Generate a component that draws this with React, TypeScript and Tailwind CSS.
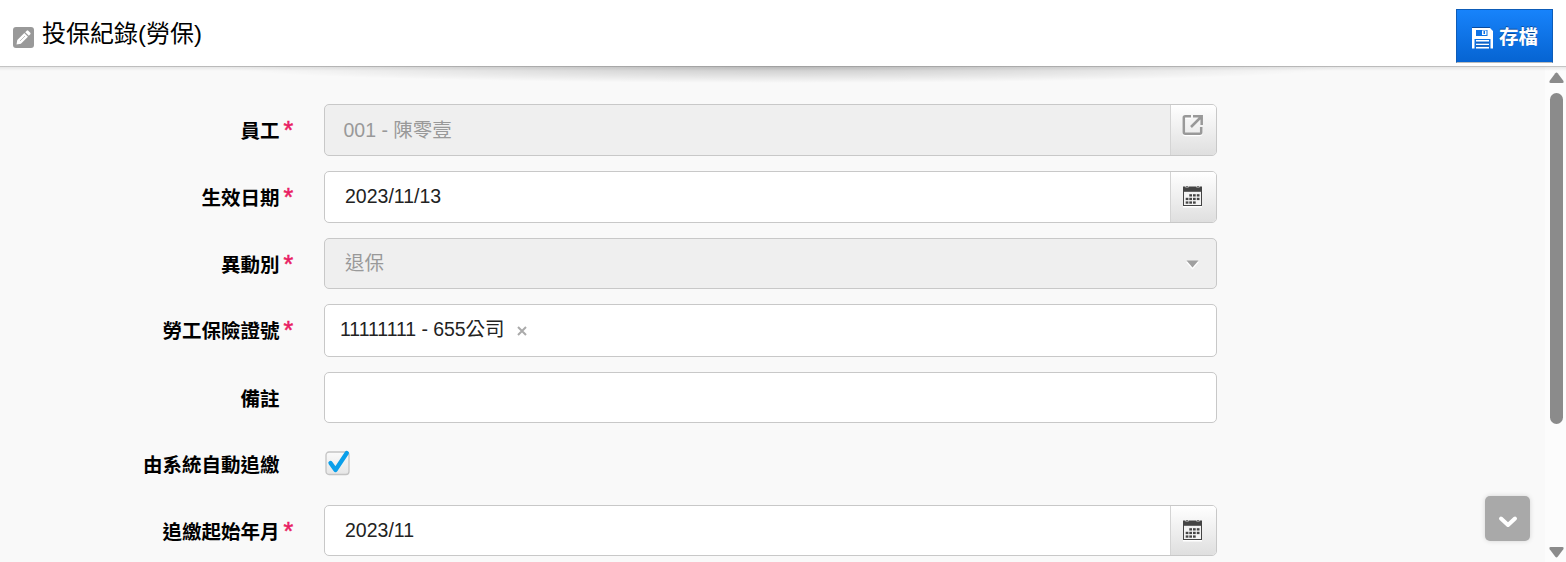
import type { ReactNode } from 'react'

interface RowProps {
  label: string
  required?: boolean
  className: string
  children: ReactNode
}

function FormRow({ label, required, className, children }: RowProps) {
  return (
    <div className={`flex ${className}`}>
      <div className="flex w-[324px] shrink-0 pt-[13px] text-[19.5px] leading-[28px]">
        <label className="w-[279.500px] text-right font-bold whitespace-nowrap text-black">{label}</label>
        {required && (
          <span className="ml-[4px] text-[25px] leading-[27px] text-[#e91e63] [-webkit-text-stroke:0.5px_#e91e63]">*</span>
        )}
      </div>
      {children}
    </div>
  )
}

function AddonButton({ children }: { children: ReactNode }) {
  return (
    <button
      type="button"
      className="flex w-[46px] shrink-0 justify-center rounded-r-[4px] border-l border-[#d4d4d4] bg-linear-to-b from-white to-[#dfdfdf] pr-[2px]"
    >
      {children}
    </button>
  )
}

const box = 'flex w-[893px] rounded-[5px] border border-[#c8c8c8] text-[19.5px]'

function CalendarIcon() {
  const dots = [
    [6.3, 8.2], [10, 8.2], [13.8, 8.2],
    [2.7, 11.8], [6.3, 11.8], [10, 11.8], [13.8, 11.8],
    [2.7, 15.4], [6.3, 15.4], [10, 15.4],
  ]
  return (
    <svg width="19" height="22" viewBox="0 0 19 22">
      <rect y="20" width="19" height="1.500" fill="#fff" />
      <path d="M0 .500h2.500v1h3v-1h8v1h3v-1H19V20H0z" fill="#444" />
      <path d="M1 5.800h17V19H1z" fill="#f3f3f3" />
      <path d="M3.300 0h1.400v1.300H3.300zM14.300 0h1.400v1.300h-1.400z" fill="#444" />
      {dots.map(([x, y]) => (
        <rect key={`${x}-${y}`} x={x} y={y} width="2.7" height="2.3" fill="#444" />
      ))}
    </svg>
  )
}

function OpenIcon() {
  return (
    <svg width="22" height="24" viewBox="0 0 22 24" fill="none" strokeWidth="2.5">
      <g stroke="#fff" transform="translate(0 1.4)">
        <path d="M9 2.300H3.300q-1.500 0-1.500 1.500v14.400q0 1.500 1.500 1.500h14.400q1.500 0 1.500-1.500V13" />
      </g>
      <g stroke="#999">
        <path d="M9 2.300H3.300q-1.500 0-1.500 1.500v14.400q0 1.500 1.500 1.500h14.400q1.500 0 1.500-1.500V13" />
        <path d="M11 2.300h8.700V11M19 3L9 13" />
      </g>
    </svg>
  )
}

function SaveIcon() {
  return (
    <svg width="21" height="22" viewBox="0 0 21 22">
      <path d="M0 0h18v1H0zM4 10.500h13V12H4z" fill="#0a4a9c" />
      <path d="M0 1h18l3 3v17.500h-2.500V12H2.500v9.500H0z" fill="#fff" />
      <path d="M4 3h11.500v6H4z" fill="#0f72e5" />
      <path d="M10 3.500h4.500v4.500H10z" fill="#fff" />
      <path d="M11.500 4h1.500v3h-1.500z" fill="#0f72e5" />
      <path d="M4 13h13v1.600H4zM4 16.400h13V18H4zM4 19.800h13v1.700H4z" fill="#fff" />
      <path d="M4 15.400h13v1H4zM4 18.800h13v1H4z" fill="#0a4a9c" opacity=".7" />
    </svg>
  )
}

function Header() {
  return (
    <header className="flex h-[66px] justify-between bg-white pr-[13px] pl-[13px]">
      <div className="flex">
        <div className="mt-[27px] flex size-[21px] items-center justify-center rounded-[3px] bg-[#999]">
          <svg width="15" height="15" viewBox="0 0 15 15" fill="#fff">
            <path d="M.5 14.500l.8-4.400L8.300 3l3.700 3.700-7.100 7zM9.200 2.200L10.700.700q.8-.7 1.600 0l2 2q.7.8 0 1.600l-1.500 1.500z" />
            <path d="M4 11l5-5" stroke="#999" strokeWidth=".6" />
          </svg>
        </div>
        <h1 className="ml-[8px] pt-[17px] text-[24px] leading-[34px] text-black">投保紀錄(勞保)</h1>
      </div>
      <button
        type="button"
        className="mt-[9px] flex h-[54px] w-[97px] border border-[#0d5cb8] border-b-[#bbb] bg-linear-to-b from-[#1783fb] to-[#0664d2] pl-[15px] text-[19.5px] font-bold text-white [text-shadow:0_-1px_0_#0a4a9c]"
      >
        <span className="mt-[17px]">
          <SaveIcon />
        </span>
        <span className="ml-[6px] pt-[13px] leading-[28px]">存檔</span>
      </button>
    </header>
  )
}

function ScrollBar() {
  return (
    <div className="flex w-[21px] shrink-0 flex-col items-center bg-[#fcfcfc] pt-[5px] pb-[4px] pl-[2px]">
      <svg width="15" height="12" viewBox="0 0 15 12" fill="#8b8b8b">
        <path d="M6.300 1.200q1.200-1.300 2.400 0l5.600 7.600q1 2.200-1 2.200H1.700q-2 0-1-2.200z" />
      </svg>
      <div className="mt-[9px] h-[331px] w-[13px] rounded-full bg-[#8b8b8b]" />
      <svg className="mt-auto" width="15" height="12" viewBox="0 0 15 12" fill="#8b8b8b">
        <path d="M6.300 10.800q1.200 1.300 2.400 0l5.600-7.600q1-2.200-1-2.200H1.700q-2 0-1 2.200z" />
      </svg>
    </div>
  )
}

export default function App() {
  return (
    <div className="relative flex h-[562px] flex-col overflow-hidden bg-[#f9f9f9] font-['Liberation_Sans','Noto_Sans_CJK_TC',sans-serif]">
      <Header />
      <div className="h-px shrink-0 bg-linear-to-r from-[#c4c4c4] via-[#a0a0a0] to-[#c4c4c4]" />
      <div className="absolute top-[67px] h-[4px] w-full bg-linear-to-b from-black/8 to-transparent" />
      <div className="absolute top-[67px] left-[220px] h-[16px] w-[1126px] bg-[radial-gradient(ellipse_50%_100%_at_50%_0%,rgba(0,0,0,0.2),rgba(0,0,0,0.1)_50%,transparent)]" />

      <div className="flex min-h-0 flex-1">
        <main className="flex-1 pt-[37px]">
          <FormRow label="員工" required className="h-[67px]">
            <div className={`${box} h-[52px] bg-[#efefef] text-[#999]`}>
              <span className="flex-1 pt-[11px] pl-[18.5px] leading-[28px]">001 - 陳零壹</span>
              <AddonButton>
                <span className="pt-[9px]">
                  <OpenIcon />
                </span>
              </AddonButton>
            </div>
          </FormRow>
          <FormRow label="生效日期" required className="h-[67px]">
            <div className={`${box} h-[52px] bg-white text-[#222]`}>
              <span className="flex-1 pt-[10px] pl-[20px] leading-[28px]">2023/11/13</span>
              <AddonButton>
                <span className="pt-[14px]">
                  <CalendarIcon />
                </span>
              </AddonButton>
            </div>
          </FormRow>
          <FormRow label="異動別" required className="h-[66px]">
            <div className={`${box} h-[51px] justify-between bg-[#efefef] pr-[17px] text-[#999]`}>
              <span className="pt-[10px] pl-[20px] leading-[28px]">退保</span>
              <svg className="mt-[21px]" width="13" height="10" viewBox="0 0 13 10">
                <path d="M0 2h13L6.500 9.500z" fill="#fff" />
                <path d="M.5.500h12L6.500 7.500z" fill="#a0a0a0" />
              </svg>
            </div>
          </FormRow>
          <FormRow label="勞工保險證號" required className="h-[68px]">
            <div className={`${box} h-[53px] bg-white text-[#222]`}>
              <span className="pt-[10px] pl-[15px] leading-[28px] tracking-[-0.07px]">11111111 - 655公司</span>
              <svg className="mt-[21px] ml-[13px]" width="10" height="10" viewBox="0 0 10 10">
                <path d="M1 1l8 8M9 1l-8 8" stroke="#aaa" strokeWidth="2" />
              </svg>
            </div>
          </FormRow>
          <FormRow label="備註" className="h-[66px]">
            <div className={`${box} h-[51px] bg-white`} />
          </FormRow>
          <FormRow label="由系統自動追繳" className="h-[67px]">
            <svg className="mt-[12px] ml-[1px]" width="26" height="27" viewBox="0 0 26 27">
              <defs>
                <linearGradient id="check-bg" x2="0" y2="1">
                  <stop stopColor="#fafafa" />
                  <stop offset="1" stopColor="#e6e6e6" />
                </linearGradient>
              </defs>
              <rect x="1" y="2" width="23" height="22.500" rx="3" fill="url(#check-bg)" stroke="#c4c4c4" strokeWidth="1.300" />
              <path d="M5.500 13l5 7L21.800 3" fill="none" stroke="#0a9fea" strokeWidth="4.300" strokeLinecap="round" strokeLinejoin="round" />
            </svg>
          </FormRow>
          <FormRow label="追繳起始年月" required className="h-[57px]">
            <div className={`${box} h-[51px] bg-white text-[#222]`}>
              <span className="flex-1 pt-[10px] pl-[20px] leading-[28px]">2023/11</span>
              <AddonButton>
                <span className="pt-[14px]">
                  <CalendarIcon />
                </span>
              </AddonButton>
            </div>
          </FormRow>
        </main>
        <ScrollBar />
      </div>

      {/* floating scroll-down button */}
      <button
        type="button"
        className="absolute top-[496px] left-[1485px] flex size-[45px] items-center justify-center rounded-[5px] bg-[#a9a9a9] pt-[6px] shadow-[0_0_5px_rgba(0,0,0,0.15)]"
      >
        <svg width="20" height="14" viewBox="0 0 20 14" fill="none" stroke="#fff" strokeWidth="4" strokeLinecap="round" strokeLinejoin="round">
          <path d="M3 3.500l7 6.500 7-6.500" />
        </svg>
      </button>
    </div>
  )
}
